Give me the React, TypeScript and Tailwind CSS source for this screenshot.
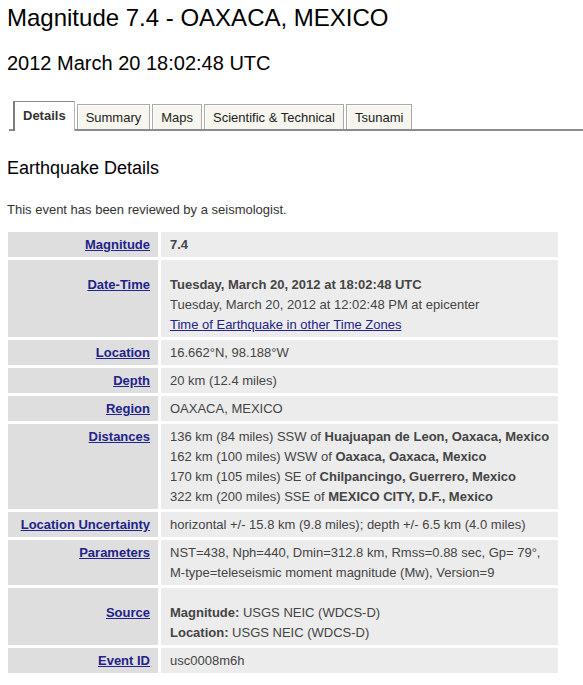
import type { ReactNode } from "react";

const tabs = ["Details", "Summary", "Maps", "Scientific & Technical", "Tsunami"];

type Row = { label: string; extra?: boolean; value: ReactNode };

const rows: Row[] = [
  { label: "Magnitude", value: <span className="font-bold">7.4</span> },
  {
    label: "Date-Time",
    extra: true,
    value: (
      <>
        <span className="font-bold">Tuesday, March 20, 2012 at 18:02:48 UTC</span>
        <br />
        Tuesday, March 20, 2012 at 12:02:48 PM at epicenter
        <br />
        <a href="#" className="text-[#22228a] underline">
          Time of Earthquake in other Time Zones
        </a>
      </>
    ),
  },
  { label: "Location", value: "16.662°N, 98.188°W" },
  { label: "Depth", value: "20 km (12.4 miles)" },
  { label: "Region", value: "OAXACA, MEXICO" },
  {
    label: "Distances",
    value: (
      <>
        136 km (84 miles) SSW of <b>Huajuapan de Leon, Oaxaca, Mexico</b>
        <br />
        162 km (100 miles) WSW of <b>Oaxaca, Oaxaca, Mexico</b>
        <br />
        170 km (105 miles) SE of <b>Chilpancingo, Guerrero, Mexico</b>
        <br />
        322 km (200 miles) SSE of <b>MEXICO CITY, D.F., Mexico</b>
      </>
    ),
  },
  {
    label: "Location Uncertainty",
    value: "horizontal +/- 15.8 km (9.8 miles); depth +/- 6.5 km (4.0 miles)",
  },
  {
    label: "Parameters",
    value: (
      <>
        NST=438, Nph=440, Dmin=312.8 km, Rmss=0.88 sec, Gp= 79°,
        <br />
        M-type=teleseismic moment magnitude (Mw), Version=9
      </>
    ),
  },
  {
    label: "Source",
    extra: true,
    value: (
      <>
        <b>Magnitude:</b> USGS NEIC (WDCS-D)
        <br />
        <b>Location:</b> USGS NEIC (WDCS-D)
      </>
    ),
  },
  { label: "Event ID", value: "usc0008m6h" },
];

export default function App() {
  return (
    <div className="min-h-[685px] w-[583px] bg-white font-['Liberation_Sans',Arial,sans-serif] text-[#222]">
      {/* HEADER */}
      <div className="px-[7px] pt-[6px]">
        <h1 className="text-[24px] leading-[24px] text-black">Magnitude 7.4 - OAXACA, MEXICO</h1>
        <h2 className="mt-[23px] text-[20px] leading-[20px] text-black">2012 March 20 18:02:48 UTC</h2>
      </div>

      {/* TABS */}
      <div className="mt-[28px] ml-[9px] flex items-end gap-[2px] border-b-2 border-[#8c8c8c] pl-[4px] text-[13px] leading-[15px]">
        <div className="-mb-[2px] h-[30px] border-l-2 border-t border-r border-l-[#7a7a7a] border-t-[#8c8c8c] border-r-[#b5b5b5] bg-white px-[8px] pt-[6px] font-bold text-[#333]">
          {tabs[0]}
        </div>
        {tabs.slice(1).map((t) => (
          <div
            key={t}
            className="h-[25px] border border-b-0 border-[#a9a9a9] bg-[#f6f6ee] px-[8px] pt-[5px] text-[#222] shadow-[inset_1px_1px_0_#ffffff]"
          >
            {t}
          </div>
        ))}
      </div>

      {/* CONTENT */}
      <div className="px-[7px]">
        <h3 className="mt-[28px] text-[18px] leading-[18px] text-black">Earthquake Details</h3>
        <p className="mt-[23px] text-[13px] leading-[20px] text-[#333]">
          This event has been reviewed by a seismologist.
        </p>

        <table className="-ml-[2px] mt-[9px] w-[556px] border-separate border-spacing-[3px] text-[13px] leading-[20px] text-[#444]">
          <tbody>
            {rows.map((r) => (
              <tr key={r.label}>
                <td
                  className={`w-[150px] whitespace-nowrap bg-[#dedede] pr-[8px] pb-[2px] text-right align-baseline ${
                    r.extra ? "pt-[15px]" : "pt-[3px]"
                  }`}
                >
                  <a href="#" className="font-bold text-[#22228a] underline">
                    {r.label}
                  </a>
                </td>
                <td
                  className={`bg-[#ececec] pl-[9px] pb-[2px] align-baseline ${
                    r.extra ? "pt-[15px]" : "pt-[3px]"
                  }`}
                >
                  {r.value}
                </td>
              </tr>
            ))}
          </tbody>
        </table>
      </div>
    </div>
  );
}
